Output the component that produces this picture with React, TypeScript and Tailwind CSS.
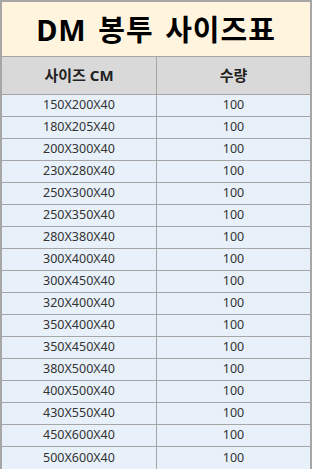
const sizes = [
  '150X200X40',
  '180X205X40',
  '200X300X40',
  '230X280X40',
  '250X300X40',
  '250X350X40',
  '280X380X40',
  '300X400X40',
  '300X450X40',
  '320X400X40',
  '350X400X40',
  '350X450X40',
  '380X500X40',
  '400X500X40',
  '430X550X40',
  '450X600X40',
  '500X600X40',
];

export default function App() {
  return (
    <div
      className="w-[312px] h-[469px] overflow-hidden bg-white"
      style={{ fontFamily: '"Noto Sans", "Noto Sans CJK KR", sans-serif' }}
    >
      <div className="border-2 border-[#a6a6a6] bg-[#e8f1fa]">
        {/* Title */}
        <div className="h-[55px] flex items-center justify-center bg-[#fff4de] border-b border-[#a6a6a6]">
          <h1 className="text-[29px] font-bold text-black leading-none tracking-[1px] [word-spacing:3px]">
            DM 봉투 사이즈표
          </h1>
        </div>

        {/* Header */}
        <div className="grid grid-cols-[154px_1px_1fr] h-[38px] bg-[#d9d9d9] border-b border-[#a6a6a6] text-[15px] font-bold text-[#222]">
          <div className="flex items-center justify-center">사이즈 CM</div>
          <div className="bg-[#a6a6a6]" />
          <div className="flex items-center justify-center">수량</div>
        </div>

        {/* Rows */}
        {sizes.map((size) => (
          <div
            key={size}
            className="grid grid-cols-[154px_1px_1fr] h-[22px] border-b border-[#a6a6a6] last:border-b-0 text-[12.5px] text-[#333]"
          >
            <div className="flex items-center justify-center">{size}</div>
            <div className="bg-[#a6a6a6]" />
            <div className="flex items-center justify-center">100</div>
          </div>
        ))}
      </div>
    </div>
  );
}
